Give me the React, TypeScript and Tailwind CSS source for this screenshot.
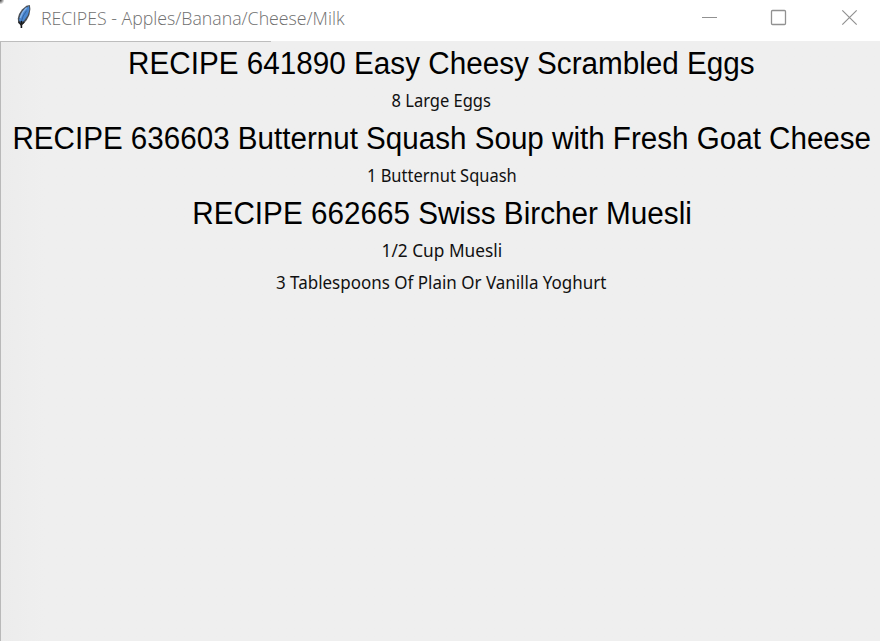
import type { ReactNode } from 'react';

function Heading({ children, fit }: { children: ReactNode; fit: string }) {
  return (
    <h2 className="flex h-[43px] items-center justify-center whitespace-nowrap pt-[2px] text-[31px] leading-none text-black">
      <span className={fit}>{children}</span>
    </h2>
  );
}

function Ingredient({ children, fit }: { children: ReactNode; fit: string }) {
  return (
    <p className="flex h-8 items-center justify-center whitespace-nowrap font-['Noto_Sans',sans-serif] text-[18px] leading-none text-[#111111]">
      <span className={fit}>{children}</span>
    </p>
  );
}

function Feather() {
  return (
    <svg className="ml-[15px] mt-1 h-[26px] w-[18px] shrink-0" viewBox="0 0 18 26" fill="none">
      <path d="M14.8 1 11.4 1.8 7 5.4 4 10l-1.2 4.5.4 4.5 2.6 2.2 2.8-1.4 3.2-3.8 2.6-5L15.4 5Z" fill="#4a5058" />
      <path d="M14 2 10.2 4.4 5.8 10l-1.8 6 1.6 2.8 3.4-2 3.6-5.3L14.4 6Z" fill="#4a88d2" />
      <path d="M11.6 3.6 7.6 8.4 5.2 14" stroke="#85b2e8" strokeWidth="1.4" />
      <path d="M11.6 6.6 8.2 12 6.4 17.5" stroke="#2c5488" strokeWidth="0.7" />
      <path d="M6.4 17v7" stroke="#101418" strokeWidth="1.6" />
      <path d="m3.6 17.6 2.6 3.4 3-3" stroke="#222" strokeWidth="1.3" />
    </svg>
  );
}

export default function App() {
  return (
    <div className="flex h-[641px] w-[880px] flex-col overflow-hidden bg-[#efefef] font-['Liberation_Sans',Arial,sans-serif]">
      <header className="relative flex h-[41px] shrink-0 bg-white">
        <div className="absolute left-0 top-0 size-[4px] bg-radial-[at_0%_0%] from-[#333333] to-white to-80%" />
        <Feather />
        <div className="ml-2 flex h-[37px] flex-1 items-center whitespace-nowrap font-['Open_Sans',sans-serif] text-[18px] font-light text-[#707070]">
          <span className="origin-left scale-x-[0.985]">RECIPES - Apples/Banana/Cheese/Milk</span>
        </div>
        <svg className="h-[41px] w-[200px] shrink-0" viewBox="0 0 200 41" fill="none" stroke="#919191">
          <path d="M22 17.5h15" />
          <rect x="91.5" y="10.5" width="14" height="14" rx="1" strokeWidth="1.3" />
          <path d="m162.3 10.3 14.4 14.4m0-14.4-14.4 14.4" strokeWidth="1.2" />
        </svg>
      </header>
      <main className="relative flex-1 border-l border-[#b9b9b9] bg-linear-to-r from-[#ececec] to-[#efefef] to-5% pl-[2px]">
        <div className="absolute -left-px top-0 h-px w-[271px] bg-[#bdbdbd]" />
        <Heading fit="scale-x-[0.957]">RECIPE 641890 Easy Cheesy Scrambled Eggs</Heading>
        <Ingredient fit="scale-x-[0.917]">8 Large Eggs</Ingredient>
        <Heading fit="scale-x-[0.9545]">RECIPE 636603 Butternut Squash Soup with Fresh Goat Cheese</Heading>
        <Ingredient fit="scale-x-[0.915]">1 Butternut Squash</Ingredient>
        <Heading fit="translate-x-px scale-x-[0.957]">RECIPE 662665 Swiss Bircher Muesli</Heading>
        <Ingredient fit="scale-x-[0.96]">1/2 Cup Muesli</Ingredient>
        <Ingredient fit="scale-x-[0.943]">3 Tablespoons Of Plain Or Vanilla Yoghurt</Ingredient>
      </main>
    </div>
  );
}
